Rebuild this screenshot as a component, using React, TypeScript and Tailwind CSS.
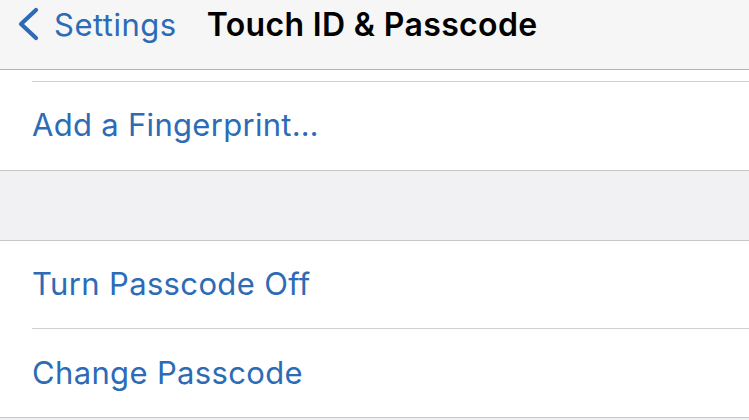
import React from 'react';

const blue = 'text-[#2c6bb6]';

const Row = ({ label, divider }: { label: string; divider?: boolean }) => (
    <div className="pl-[32px] bg-white">
        <div className={`h-[88px] flex items-center pb-[2px] ${divider ? 'border-b border-[#cfcfd1]' : ''}`}>
            <span className={`text-[31px] leading-none tracking-[0.35px] ${blue}`}>{label}</span>
        </div>
    </div>
);

const App: React.FC = () => {
    return (
        <div className="w-[749px] h-[420px] overflow-hidden bg-[#f1f1f3]" style={{ fontFamily: 'Inter, "Noto Sans", sans-serif' }}>
            {/* nav bar */}
            <div className="h-[70px] bg-[#f6f6f6] border-b border-[#b3b3b3] flex items-start pt-[7px]">
                <div className="flex items-center pl-[16px]">
                    <svg width="24" height="34" viewBox="0 0 24 34" className="mr-[14px]">
                        <path d="M20 3 L5 17 L20 31" fill="none" stroke="#2c6bb6" strokeWidth="4.2" strokeLinecap="round" strokeLinejoin="round" />
                    </svg>
                    <span className={`text-[31px] leading-none tracking-[0.5px] ${blue}`}>Settings</span>
                </div>
                <span className="ml-[30px] mt-[2px] text-[32px] leading-none font-semibold tracking-[0.35px] text-black">Touch ID &amp; Passcode</span>
            </div>

            <div className="bg-white pt-[11px]">
                <div className="pl-[32px]">
                    <div className="border-t border-[#cfcfd1]" />
                </div>
                <div className="pl-[32px] h-[88px] flex items-center pb-[4px]">
                    <span className={`text-[31px] leading-none tracking-[0.3px] ${blue}`}>Add a Fingerprint…</span>
                </div>
            </div>

            <div className="h-[71px] border-t border-b border-[#c6c6c8] bg-[#f1f1f3]" />

            <Row label="Turn Passcode Off" divider />
            <Row label="Change Passcode" />
            <div className="border-t border-[#c6c6c8]" />
        </div>
    );
};

export default App;
